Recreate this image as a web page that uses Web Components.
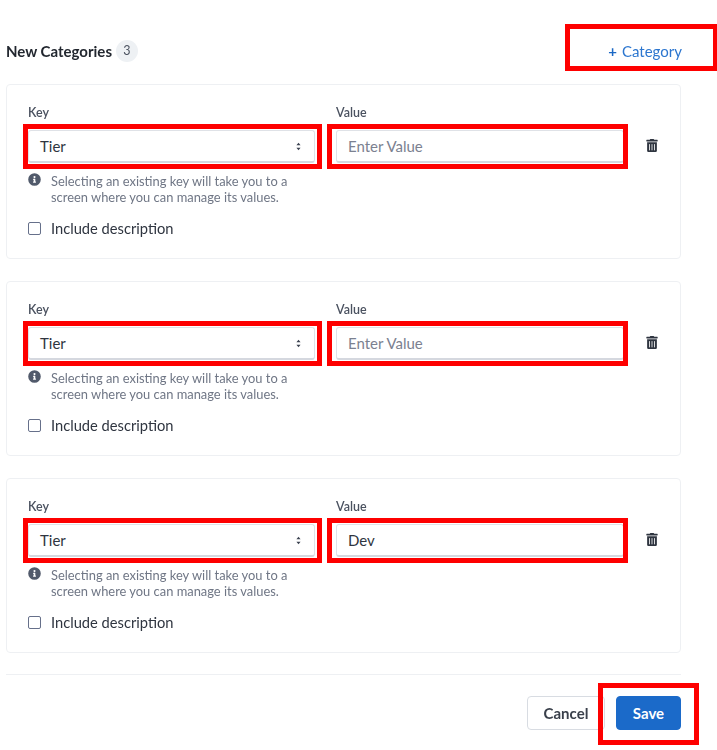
<!DOCTYPE html>
<html lang="en">
<head>
<meta charset="utf-8">
<title>New Categories</title>
<style>
    html, body { margin: 0; background: #fff; }
    body { font-family: "Lato", "Liberation Sans", sans-serif; color: #2f3540; }
</style>
</head>
<body>
<categories-panel>
    <category-card></category-card>
    <category-card></category-card>
    <category-card value="Dev"></category-card>
</categories-panel>

<script>
// red annotation drawn over whatever it wraps
class RedMark extends HTMLElement {
    constructor() {
        super();
        this.attachShadow({ mode: 'open' });
        this.shadowRoot.innerHTML = `
            <style>
                :host { display: block; position: relative; }
                .mark {
                    position: absolute;
                    top: var(--t, -6px);
                    right: var(--r, -7px);
                    bottom: var(--b, -6px);
                    left: var(--l, -5px);
                    border: 5px solid #fe0000;
                    pointer-events: none;
                }
            </style>
            <slot></slot>
            <div class="mark"></div>
        `;
    }
}

class CategoryCard extends HTMLElement {
    constructor() {
        super();
        this.attachShadow({ mode: 'open' });
    }

    connectedCallback() {
        const value = this.getAttribute('value');
        const valueText = value
            ? `<span class="filled">${value}</span>`
            : `<span class="placeholder">Enter Value</span>`;

        this.shadowRoot.innerHTML = `
            <style>
                :host {
                    display: block;
                    box-sizing: border-box;
                    width: 675px;
                    height: 175px;
                    padding: 20px 0 0 21px;
                    background: #fff;
                    border: 1px solid #eef0f3;
                    border-radius: 4px;
                }
                .fields {
                    display: grid;
                    grid-template-columns: 287px 288px 1fr;
                    column-gap: 21px;
                }
                label {
                    display: block;
                    height: 15px;
                    margin-bottom: 10px;
                    font-size: 12.5px;
                    line-height: 15px;
                    font-weight: 600;
                    color: #4b5260;
                }
                .control {
                    box-sizing: border-box;
                    display: flex;
                    align-items: center;
                    justify-content: space-between;
                    height: 33px;
                    padding: 0 13px 0 11px;
                    background: #fff;
                    border: 1px solid #dfe2e7;
                    border-bottom: 2px solid #d5d8df;
                    border-radius: 3px;
                    font-size: 15px;
                    color: #2f3540;
                }
                .placeholder { color: #7b8190; }
                .trash {
                    display: flex;
                    align-items: center;
                    height: 30px;
                    margin-top: 25px;
                    padding-left: 1px;
                }
                .hint {
                    display: flex;
                    gap: 10px;
                    margin-top: 10px;
                    font-size: 12.9px;
                    line-height: 16px;
                    color: #6f7685;
                }
                .hint svg { flex: none; }
                .check {
                    display: flex;
                    align-items: center;
                    gap: 10px;
                    margin-top: 14px;
                    font-size: 14.7px;
                    line-height: 18px;
                    color: #2f3540;
                }
                .box {
                    box-sizing: border-box;
                    width: 13px;
                    height: 13px;
                    border: 1px solid #66708a;
                    border-radius: 2px;
                    background: #fff;
                }
            </style>
            <div class="fields">
                <div>
                    <label>Key</label>
                    <red-mark>
                        <div class="control">
                            <span>Tier</span>
                            <svg width="5" height="9" viewBox="0 0 6 10"><path d="M3 0.5 5.5 3.6H.5zM3 9.5 .5 6.4h5z" fill="#3b4250"/></svg>
                        </div>
                    </red-mark>
                </div>
                <div>
                    <label>Value</label>
                    <red-mark style="--l:-9px;--r:-4px">
                        <div class="control">${valueText}</div>
                    </red-mark>
                </div>
                <div class="trash">
                    <svg width="12" height="13" viewBox="0 0 448 512"><path fill="#2f3540" d="M32 464a48 48 0 0 0 48 48h288a48 48 0 0 0 48-48V128H32zm272-256a16 16 0 0 1 32 0v224a16 16 0 0 1-32 0zm-96 0a16 16 0 0 1 32 0v224a16 16 0 0 1-32 0zm-96 0a16 16 0 0 1 32 0v224a16 16 0 0 1-32 0zM432 32H312l-9.4-18.7A24 24 0 0 0 281.1 0H166.8a23.72 23.72 0 0 0-21.4 13.3L136 32H16A16 16 0 0 0 0 48v32a16 16 0 0 0 16 16h416a16 16 0 0 0 16-16V48a16 16 0 0 0-16-16z"/></svg>
                </div>
            </div>
            <div class="hint">
                <svg width="13" height="13" viewBox="0 0 512 512"><path fill="#515a6b" d="M256 8a248 248 0 1 0 0 496 248 248 0 0 0 0-496zm0 110a42 42 0 1 1 0 84 42 42 0 0 1 0-84zm56 254a12 12 0 0 1-12 12h-88a12 12 0 0 1-12-12v-24a12 12 0 0 1 12-12h12v-64h-12a12 12 0 0 1-12-12v-24a12 12 0 0 1 12-12h64a12 12 0 0 1 12 12v100h12a12 12 0 0 1 12 12z"/></svg>
                <div>Selecting an existing key will take you to a<br>screen where you can manage its values.</div>
            </div>
            <div class="check">
                <span class="box"></span>
                <span>Include description</span>
            </div>
        `;
    }
}

class CategoriesPanel extends HTMLElement {
    constructor() {
        super();
        this.attachShadow({ mode: 'open' });
        this.shadowRoot.innerHTML = `
            <style>
                :host {
                    display: block;
                    box-sizing: border-box;
                    width: 717px;
                    height: 750px;
                    padding: 31px 0 0 6px;
                    overflow: hidden;
                    filter: blur(0.35px);
                }
                header {
                    display: flex;
                    align-items: center;
                    justify-content: space-between;
                    width: 676px;
                    height: 40px;
                    margin-bottom: 13px;
                }
                .title { display: flex; align-items: center; gap: 4px; }
                h2 {
                    margin: 0;
                    font-size: 15px;
                    font-weight: 700;
                    color: #22272f;
                }
                .count {
                    width: 22px;
                    height: 22px;
                    border-radius: 50%;
                    background: #eef1f4;
                    font-size: 12.5px;
                    line-height: 22px;
                    text-align: center;
                    color: #4b5260;
                }
                .add {
                    font-size: 15px;
                    color: #2c76cf;
                    --t: -18px; --r: -36px; --b: -11px; --l: -43px;
                }
                .add b { color: #1c68c4; margin-right: 5px; }
                .cards { display: flex; flex-direction: column; gap: 22px; }
                footer {
                    display: flex;
                    justify-content: flex-end;
                    gap: 11px;
                    width: 675px;
                    margin-top: 21px;
                    padding-top: 21px;
                    border-top: 1px solid #eef0f3;
                }
                .btn {
                    box-sizing: border-box;
                    height: 34px;
                    border-radius: 4px;
                    font-size: 15px;
                    font-weight: 700;
                    line-height: 32px;
                    text-align: center;
                }
                .cancel { width: 78px; border: 1px solid #d8dce2; color: #3a404b; background: #fff; }
                .save { width: 65px; border: 1px solid #1b6ac9; background: #1b6ac9; color: #fff; }
                .save-mark { --t: -13px; --r: -18px; --b: -15px; --l: -18px; }
            </style>
            <header>
                <div class="title"><h2>New Categories</h2><span class="count">3</span></div>
                <red-mark class="add"><b>+</b>Category</red-mark>
            </header>
            <div class="cards"><slot></slot></div>
            <footer>
                <div class="btn cancel">Cancel</div>
                <red-mark class="save-mark"><div class="btn save">Save</div></red-mark>
            </footer>
        `;
    }
}

customElements.define('red-mark', RedMark);
customElements.define('category-card', CategoryCard);
customElements.define('categories-panel', CategoriesPanel);
</script>
</body>
</html>
